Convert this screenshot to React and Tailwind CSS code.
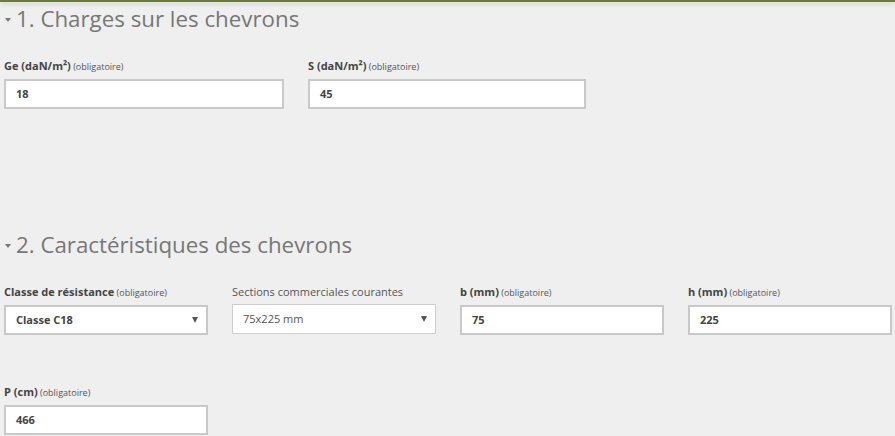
import React from "react";

const Label = ({ name, required = true, bold = true }) => (
  <div className="text-[11px] leading-[14px] text-[#444] whitespace-nowrap">
    <span className={bold ? "font-bold" : "font-normal text-[#555]"}>{name}</span>
    {required && <span className="text-[9px] text-[#555]"> (obligatoire)</span>}
  </div>
);

const Field = ({ label, value, width }) => (
  <div className={width}>
    <Label name={label} />
    <div className="mt-[5px] h-[30px] bg-white border-2 border-[#c9c9c9] flex items-center pl-[10px] text-[11px] font-bold text-[#444]">
      {value}
    </div>
  </div>
);

const SelectField = ({ label, value, required = true, bold = true }) => (
  <div className="w-[204px]">
    <Label name={label} required={required} bold={bold} />
    <div
      className={`mt-[5px] h-[30px] bg-white flex items-center justify-between pl-[10px] pr-[8px] text-[11px] text-[#444] ${
        bold ? "border-2 border-[#c9c9c9] font-bold" : "border border-[#cfcfcf] font-normal text-[#555]"
      }`}
    >
      <span>{value}</span>
      <span className="w-0 h-0 border-l-[3px] border-r-[3px] border-t-[6px] border-l-transparent border-r-transparent border-t-[#555]" />
    </div>
  </div>
);

const Heading = ({ children, className }) => (
  <div className={`flex items-center text-[22.3px] leading-[30px] text-[#777] ${className}`}>
    <span className="ml-[5px] mr-[5px] mt-[2px] w-0 h-0 border-l-[3px] border-r-[3px] border-t-[4px] border-l-transparent border-r-transparent border-t-[#777]" />
    <span>{children}</span>
  </div>
);

export default function App() {
  return (
    <div
      className="w-[895px] h-[436px] overflow-hidden bg-[#efefef]"
      style={{ fontFamily: '"Open Sans", "Liberation Sans", sans-serif' }}
    >
      <div className="h-[2px] bg-[#6b7a3b] shadow-[0_2px_5px_rgba(0,0,0,0.18)]" />
      <div className="pl-[4px]">
        <Heading className="mt-[2px] -ml-[4px]">1. Charges sur les chevrons</Heading>
        <div className="flex gap-[24px] mt-[25px]">
          <Field label="Ge (daN/m²)" value="18" width="w-[280px]" />
          <Field label="S (daN/m²)" value="45" width="w-[278px]" />
        </div>

        <Heading className="mt-[121px] -ml-[4px]">2. Caractéristiques des chevrons</Heading>
        <div className="flex gap-[24px] mt-[25px]">
          <SelectField label="Classe de résistance" value="Classe C18" />
          <SelectField label="Sections commerciales courantes" value="75x225 mm" required={false} bold={false} />
          <Field label="b (mm)" value="75" width="w-[204px]" />
          <Field label="h (mm)" value="225" width="w-[204px]" />
        </div>

        <div className="flex mt-[50px]">
          <Field label="P (cm)" value="466" width="w-[204px]" />
        </div>
      </div>
    </div>
  );
}
